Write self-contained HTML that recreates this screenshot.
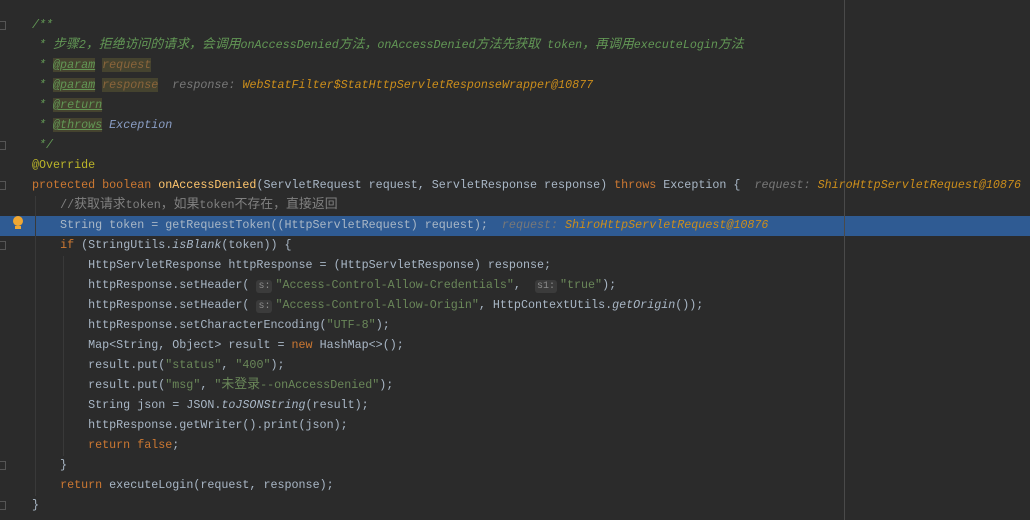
<!DOCTYPE html>
<html><head><meta charset="utf-8"><style>
body{margin:0;width:1030px;height:520px;background:#2b2b2b;overflow:hidden;position:relative;font-family:"Liberation Mono","Noto Sans CJK SC",monospace;font-size:11.7px;color:#a9b7c6}
.l{position:absolute;left:32px;height:20px;line-height:20px;white-space:pre}
.k{color:#cc7832}.s{color:#6a8759}.a{color:#bbb529}.c{color:#808080}.d{color:#629755;font-style:italic}
.t{color:#629755;text-decoration:underline;background:#45432f;font-style:italic}
.p{color:#8a653b;background:#45432f;font-style:italic}
.h{color:#787878;font-style:italic}.v{color:#cc8e1b;font-style:italic}
.m{color:#ffc66d}.i{font-style:italic}
.z{font-size:12.9px}
.hint{background:#3b3b3b;color:#8c8c8c;border-radius:3px;padding:1px 2px;font-size:10px;margin-right:3px}
.hl{position:absolute;left:0;width:1030px;top:216px;height:20px;background:#2f5b93}
.g{position:absolute;width:1px;background:#393939}
.f{position:absolute;left:0;width:5px;height:7px;border:1px solid #555;border-left:none}
</style></head><body>
<div class="hl"></div>
<div style="position:absolute;left:844px;top:0;width:1px;height:520px;background:#4a4a4a"></div>
<div class="g" style="left:35px;top:196px;height:300px"></div>
<div class="g" style="left:63px;top:256px;height:200px"></div>
<div class="f" style="top:21px"></div><div class="f" style="top:141px"></div><div class="f" style="top:181px"></div><div class="f" style="top:241px"></div><div class="f" style="top:461px"></div><div class="f" style="top:501px"></div>
<div style="position:absolute;left:13px;top:216px;width:10px;height:10px;border-radius:50%;background:#f0a732"></div>
<div style="position:absolute;left:15px;top:226px;width:6px;height:3px;background:#f0a732"></div>
<div class="l" style="top:15px"><span class="d">/**</span></div>
<div class="l" style="top:35px"><span class="d"> * <span class="z">步骤</span>2<span class="z">，拒绝访问的请求，会调用</span>onAccessDenied<span class="z">方法，</span>onAccessDenied<span class="z">方法先获取</span> token<span class="z">，再调用</span>executeLogin<span class="z">方法</span></span></div>
<div class="l" style="top:55px"><span class="d"> * </span><span class="t">@param</span><span class="d"> </span><span class="p">request</span></div>
<div class="l" style="top:75px"><span class="d"> * </span><span class="t">@param</span><span class="d"> </span><span class="p">response</span>  <span class="h">response: </span><span class="v">WebStatFilter$StatHttpServletResponseWrapper@10877</span></div>
<div class="l" style="top:95px"><span class="d"> * </span><span class="t">@return</span></div>
<div class="l" style="top:115px"><span class="d"> * </span><span class="t">@throws</span><span class="d"> </span><span class="i" style="color:#8a9ec5">Exception</span></div>
<div class="l" style="top:135px"><span class="d"> */</span></div>
<div class="l" style="top:155px"><span class="a">@Override</span></div>
<div class="l" style="top:175px"><span class="k">protected boolean </span><span class="m">onAccessDenied</span>(ServletRequest request, ServletResponse response) <span class="k">throws </span>Exception {  <span class="h">request: </span><span class="v">ShiroHttpServletRequest@10876</span></div>
<div class="l" style="top:195px">    <span class="c">//<span class="z">获取请求</span>token<span class="z">，如果</span>token<span class="z">不存在，直接返回</span></span></div>
<div class="l" style="top:215px">    String token = getRequestToken((HttpServletRequest) request);  <span class="h">request: </span><span class="v">ShiroHttpServletRequest@10876</span></div>
<div class="l" style="top:235px">    <span class="k">if </span>(StringUtils.<span class="i">isBlank</span>(token)) {</div>
<div class="l" style="top:255px">        HttpServletResponse httpResponse = (HttpServletResponse) response;</div>
<div class="l" style="top:275px">        httpResponse.setHeader( <span class="hint">s:</span><span class="s">"Access-Control-Allow-Credentials"</span>,  <span class="hint">s1:</span><span class="s">"true"</span>);</div>
<div class="l" style="top:295px">        httpResponse.setHeader( <span class="hint">s:</span><span class="s">"Access-Control-Allow-Origin"</span>, HttpContextUtils.<span class="i">getOrigin</span>());</div>
<div class="l" style="top:315px">        httpResponse.setCharacterEncoding(<span class="s">"UTF-8"</span>);</div>
<div class="l" style="top:335px">        Map&lt;String, Object&gt; result = <span class="k">new </span>HashMap&lt;&gt;();</div>
<div class="l" style="top:355px">        result.put(<span class="s">"status"</span>, <span class="s">"400"</span>);</div>
<div class="l" style="top:375px">        result.put(<span class="s">"msg"</span>, <span class="s">"<span class="z">未登录</span>--onAccessDenied"</span>);</div>
<div class="l" style="top:395px">        String json = JSON.<span class="i">toJSONString</span>(result);</div>
<div class="l" style="top:415px">        httpResponse.getWriter().print(json);</div>
<div class="l" style="top:435px">        <span class="k">return false</span>;</div>
<div class="l" style="top:455px">    }</div>
<div class="l" style="top:475px">    <span class="k">return </span>executeLogin(request, response);</div>
<div class="l" style="top:495px">}</div>
</body></html>
